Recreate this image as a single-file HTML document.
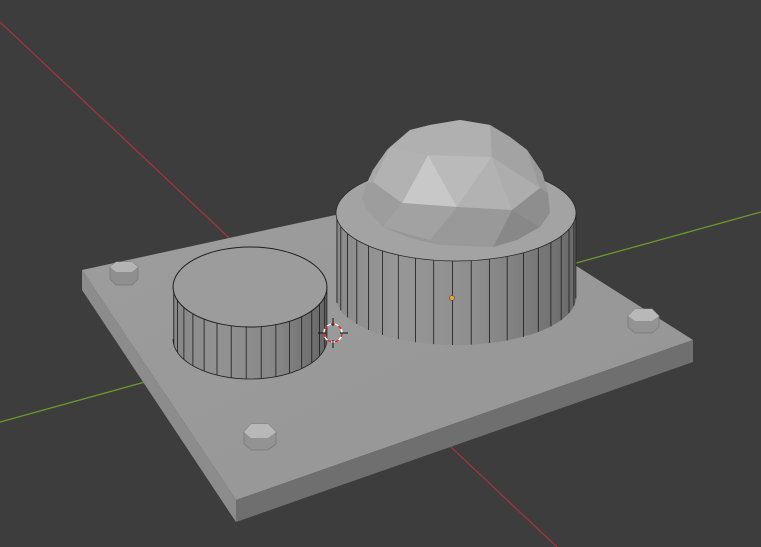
<!DOCTYPE html>
<html><head><meta charset="utf-8"><style>
html,body{margin:0;padding:0;background:#3d3d3d;overflow:hidden}
svg{display:block}
</style></head><body>
<svg id="s" width="761" height="547" viewBox="0 0 761 547" xmlns="http://www.w3.org/2000/svg">
<defs>
<linearGradient id="bc" x1="0" x2="1" y1="0" y2="0">
<stop offset="0" stop-color="#8a8a8a"/><stop offset="0.25" stop-color="#979797"/><stop offset="0.6" stop-color="#8d8d8d"/><stop offset="1" stop-color="#6a6a6a"/>
</linearGradient>
<linearGradient id="sc" x1="0" x2="1" y1="0" y2="0">
<stop offset="0" stop-color="#878787"/><stop offset="0.3" stop-color="#929292"/><stop offset="0.7" stop-color="#858585"/><stop offset="1" stop-color="#666"/>
</linearGradient>
<linearGradient id="pt" x1="0" x2="1" y1="0" y2="1">
<stop offset="0" stop-color="#9d9d9d"/><stop offset="1" stop-color="#959595"/>
</linearGradient>
</defs>
<rect width="761" height="547" fill="#3d3d3d"/>
<line x1="0" y1="22" x2="557" y2="547" stroke="#a0343e" stroke-width="1.3"/>
<line x1="0" y1="422" x2="761" y2="212" stroke="#6c9a2a" stroke-width="1.3"/>
<polygon points="82,270 455,189 693,340 236,500" fill="url(#pt)"/>
<polygon points="82,270 236,500 236,522 82,290" fill="#8c8c8c"/>
<polygon points="236,500 693,340 693,362 236,522" fill="#6f6f6f"/>
<path d="M173,287 L173,339 A77,40 0 0 0 327,339 L327,287 Z" fill="url(#sc)"/>
<g id="sl" stroke="#1a1a1a" stroke-width="0.8"></g>
<path d="M173,339 A77,40 0 0 0 327,339" fill="none" stroke="#222" stroke-width="0.8"/>
<ellipse cx="250" cy="287" rx="77" ry="40" fill="#9c9c9c" stroke="#1e1e1e" stroke-width="1"/>
<path d="M336,213 L336,297 A120,48 0 0 0 576,297 L576,213 Z" fill="url(#bc)"/>
<g id="bl" stroke="#1a1a1a" stroke-width="0.8"></g>
<ellipse cx="456" cy="213" rx="120" ry="48" fill="#a3a3a3" stroke="#2a2a2a" stroke-width="0.8"/>
<g stroke-linejoin="round">
<polygon points="460,120 490,125 510,137 527,150 542,172 548,193 550,213 540,227 517,240 493,247 440,245 410,238 383,227 367,210 362,198 367,183 373,170 387,150 410,130 430,125" fill="#a4a4a4"/>
<polygon points="410,130 430,125 460,120 490,125 492,157 428,155 390,147" fill="#b0b0b0"/>
<polygon points="490,125 510,137 527,150 540,188 492,157" fill="#a3a3a3"/>
<polygon points="527,150 542,172 548,193 540,188" fill="#9a9a9a"/>
<polygon points="428,155 492,157 457,207" fill="#bababa"/>
<polygon points="428,155 402,203 457,207" fill="#c8c8c8"/>
<polygon points="390,147 428,155 402,203 373,182" fill="#b2b2b2"/>
<polygon points="387,150 390,147 373,182 367,183 373,170" fill="#a8a8a8"/>
<polygon points="373,182 402,203 383,227 367,210 362,198 367,183" fill="#9d9d9d"/>
<polygon points="492,157 540,188 512,210" fill="#adadad"/>
<polygon points="492,157 512,210 457,207" fill="#b2b2b2"/>
<polygon points="540,188 548,193 550,213 540,227 512,210" fill="#8e8e8e"/>
<polygon points="402,203 457,207 430,240 383,227" fill="#a2a2a2"/>
<polygon points="383,227 430,240 440,245 410,238" fill="#979797"/>
<polygon points="457,207 512,210 493,247 440,245 430,240" fill="#999"/>
<polygon points="512,210 540,227 517,240 493,247" fill="#888"/>
</g>
<g stroke-linejoin="round">
<polygon points="110,267 116,262 132,262 138,267 138,279 132,285 116,285 110,279" fill="#8f8f8f" stroke="#7a7a7a" stroke-width="0.8"/>
<polygon points="110,267 116,262 132,262 138,267 132,272 116,272" fill="#b4b4b4"/>
<polygon points="244,432 251,424 268,424 276,432 276,444 268,450 251,450 244,444" fill="#939393" stroke="#7a7a7a" stroke-width="0.8"/>
<polygon points="244,432 251,424 268,424 276,432 268,438 251,438" fill="#b8b8b8"/>
<polygon points="628,316 635,309 652,309 659,316 659,327 652,333 635,333 628,327" fill="#939393" stroke="#7a7a7a" stroke-width="0.8"/>
<polygon points="628,316 635,309 652,309 659,316 652,321 635,321" fill="#b8b8b8"/>
</g>
<circle cx="333" cy="333" r="9" fill="none" stroke="#fff" stroke-width="1.5"/>
<circle cx="333" cy="333" r="9" fill="none" stroke="#d22" stroke-width="1.5" stroke-dasharray="4 4"/>
<g stroke="#111" stroke-width="1"><line x1="333" y1="318" x2="333" y2="326"/><line x1="333" y1="340" x2="333" y2="348"/><line x1="318" y1="333" x2="326" y2="333"/><line x1="340" y1="333" x2="348" y2="333"/></g>
<circle cx="452" cy="298" r="2.5" fill="#f0a030" stroke="#333" stroke-width="0.5"/>
</svg>
<script>
function lines(id,cx,top,bot,rx,ry,n,off){var g=document.getElementById(id),s='';
for(var i=0;i<n;i++){var a=off+i*2*Math.PI/n;var x=cx+rx*Math.cos(a),dy=ry*Math.sin(a);if(dy<=0)continue;
s+='<line x1="'+x.toFixed(1)+'" y1="'+(top+dy).toFixed(1)+'" x2="'+x.toFixed(1)+'" y2="'+(bot+dy).toFixed(1)+'"/>';}
g.innerHTML=s;}
lines('sl',250,287,339,77,40,32,0.05);
lines('bl',456,213,297,120,48,40,0.03);
</script>
</body></html>
